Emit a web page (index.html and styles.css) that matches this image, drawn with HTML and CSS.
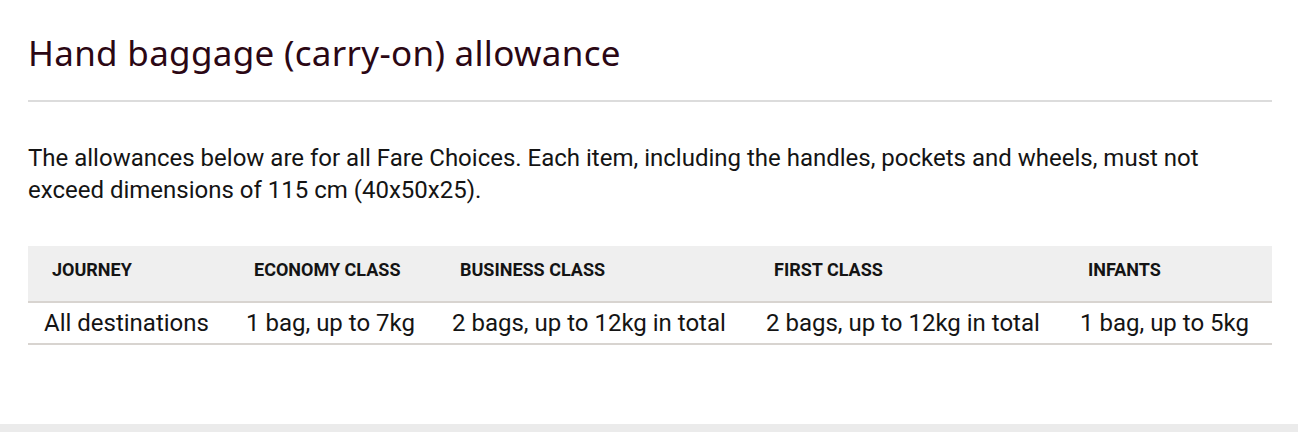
FILE: index.html
```html
<!DOCTYPE html>
<html lang="en">
<head>
<meta charset="utf-8">
<title>Hand baggage allowance</title>
<link rel="stylesheet" href="styles.css">
</head>
<body>
<main class="page">
  <h2 class="title">Hand baggage (carry-on) allowance</h2>
  <hr class="divider">
  <p class="intro">The allowances below are for all Fare Choices. Each item, including the handles, pockets and wheels, must not exceed dimensions of 115 cm (40x50x25).</p>
  <table class="allowance">
    <colgroup>
      <col class="c1"><col class="c2"><col class="c3"><col class="c4"><col class="c5">
    </colgroup>
    <thead>
      <tr>
        <th>JOURNEY</th>
        <th>ECONOMY CLASS</th>
        <th>BUSINESS CLASS</th>
        <th>FIRST CLASS</th>
        <th>INFANTS</th>
      </tr>
    </thead>
    <tbody>
      <tr>
        <td>All destinations</td>
        <td>1 bag, up to 7kg</td>
        <td>2 bags, up to 12kg in total</td>
        <td>2 bags, up to 12kg in total</td>
        <td>1 bag, up to 5kg</td>
      </tr>
    </tbody>
  </table>
</main>
<footer class="footer-bar"></footer>
</body>
</html>
```
FILE: styles.css
```css
html, body {
  margin: 0;
  padding: 0;
  background: #ffffff;
}
body {
  height: 432px;
  overflow: hidden;
  display: flex;
  flex-direction: column;
  font-family: Roboto, "Liberation Sans", sans-serif;
  color: #141414;
}
.page {
  padding: 0 26px 0 28px;
  flex: 1;
}
.title {
  margin: 0;
  padding-top: 31px;
  font-family: "Noto Sans", "Open Sans", sans-serif;
  font-weight: 400;
  font-size: 35px;
  line-height: 44px;
  color: #2b0714;
  letter-spacing: 0.3px;
}
.divider {
  margin: 25px 0 0 0;
  border: 0;
  height: 2px;
  background: #dcdcdc;
}
.intro {
  margin: 40px 0 0 0;
  font-size: 24px;
  line-height: 32px;
  color: #141414;
}
.allowance {
  margin-top: 40px;
  width: 100%;
  border-collapse: collapse;
  table-layout: fixed;
}
.c1 { width: 202px; }
.c2 { width: 206px; }
.c3 { width: 314px; }
.c4 { width: 314px; }
.c5 { width: auto; }
.allowance th {
  background: #efefef;
  text-align: left;
  font-size: 18px;
  font-weight: 700;
  color: #141414;
  height: 56px;
  padding: 0 0 8px 24px;
  box-sizing: border-box;
  border-bottom: 2px solid #d8d4d0;
  vertical-align: middle;
}
.allowance td {
  font-size: 24px;
  line-height: 28px;
  height: 42px;
  padding: 0 0 0 16px;
  box-sizing: border-box;
  border-bottom: 2px solid #d8d4d0;
  white-space: nowrap;
  vertical-align: middle;
  color: #141414;
}
.footer-bar {
  height: 8px;
  background: #ebebeb;
}
```
